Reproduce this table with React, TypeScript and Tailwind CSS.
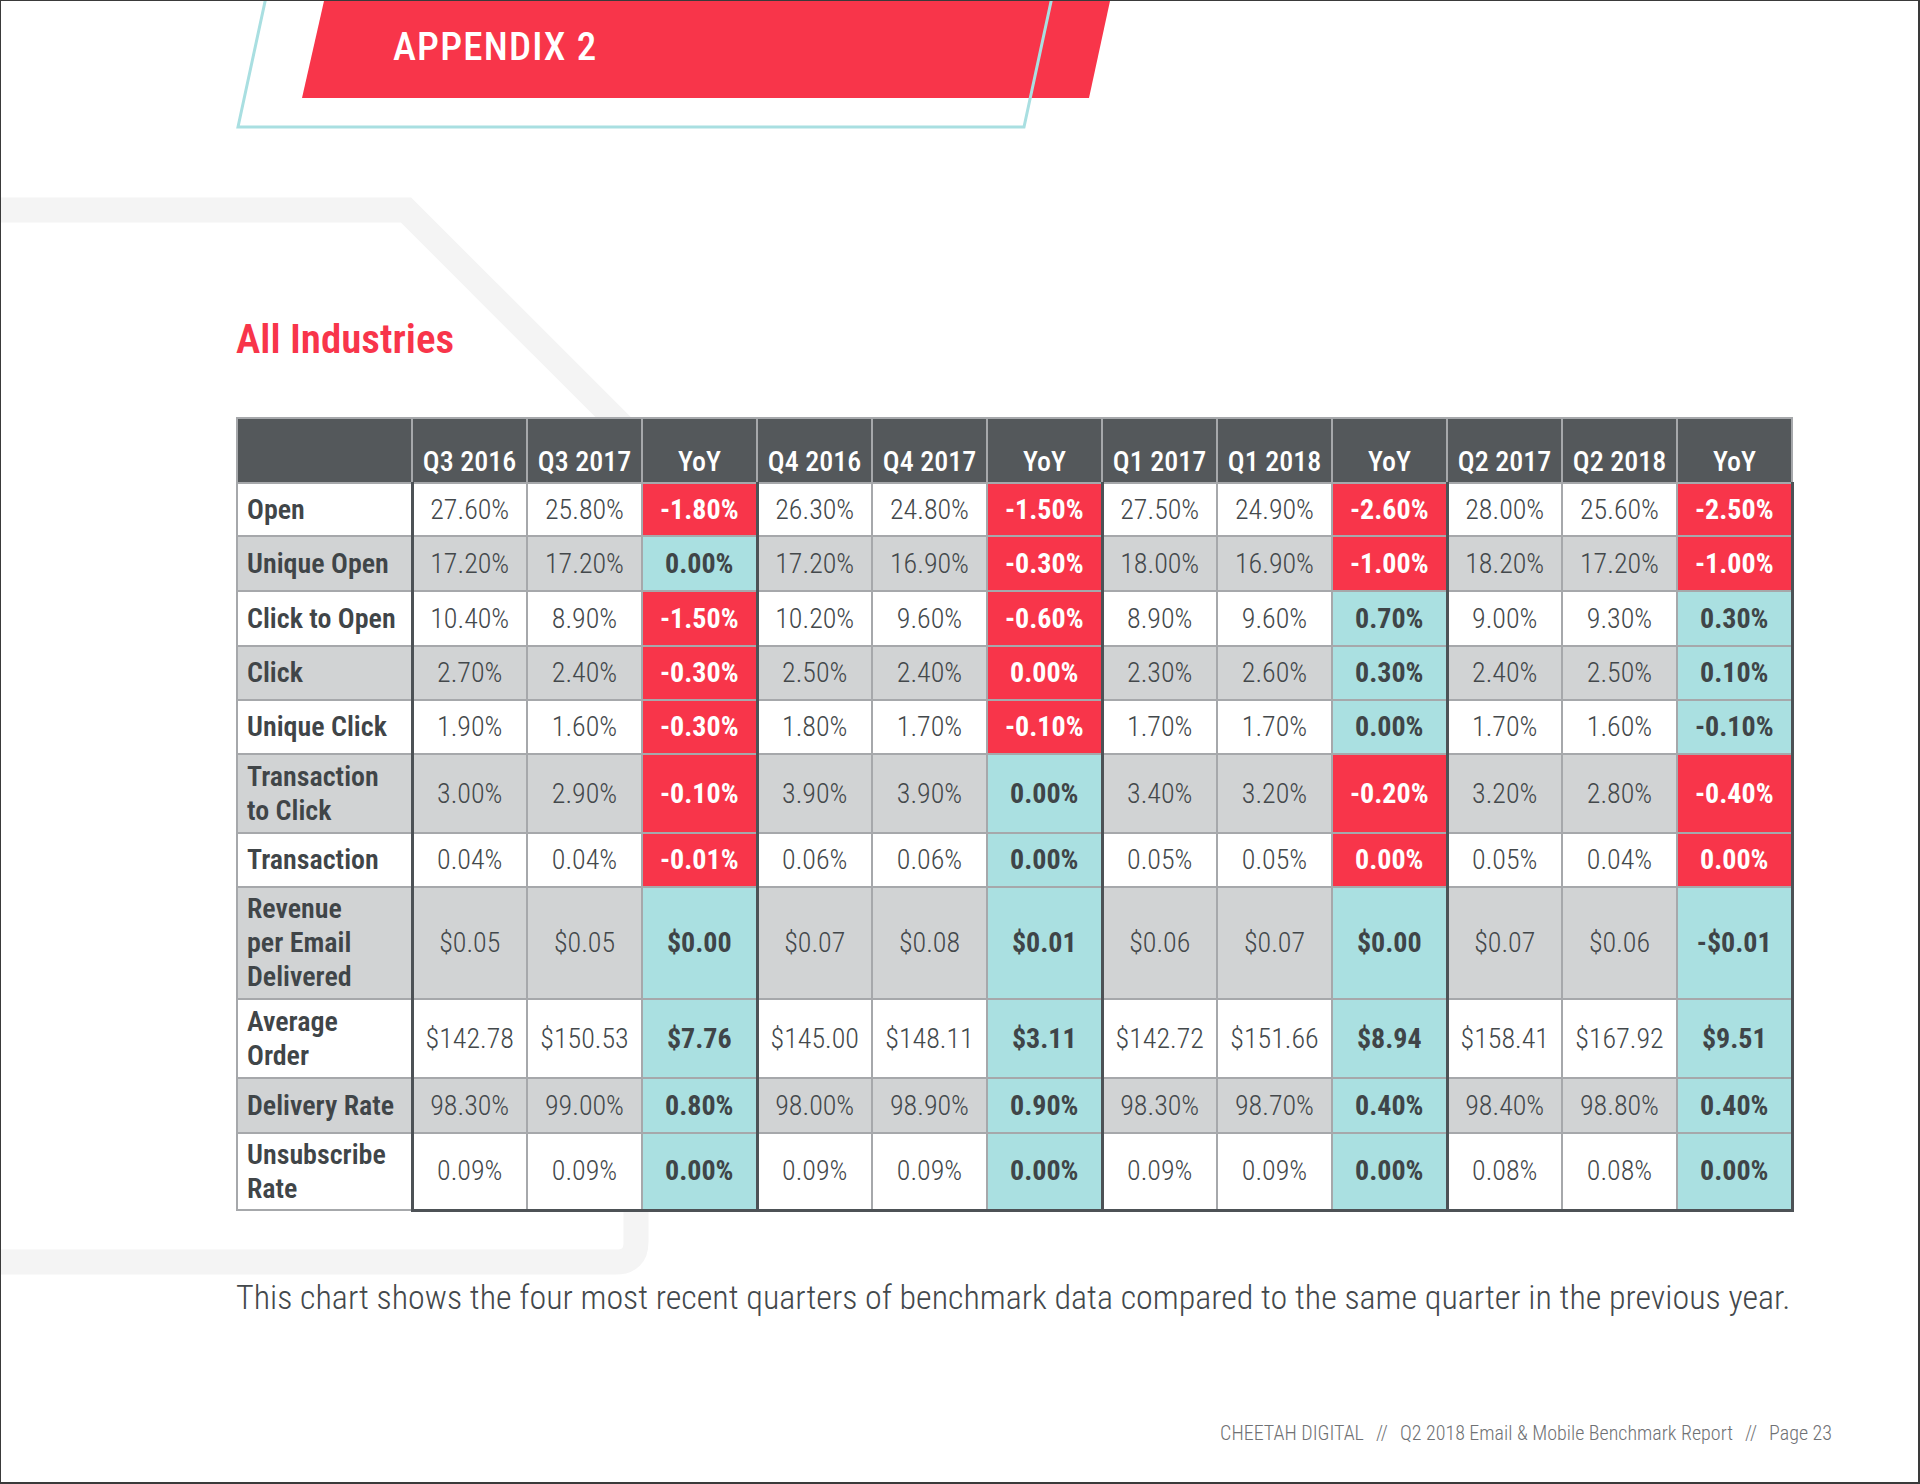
const COND = "font-['Roboto_Condensed',sans-serif]";

type Group = [string, string, string, boolean];
type Row = { label: string[]; h: string; grey: boolean; groups: Group[] };

const R = true;
const T = false;

const heads = ["Q3 2016", "Q3 2017", "YoY", "Q4 2016", "Q4 2017", "YoY", "Q1 2017", "Q1 2018", "YoY", "Q2 2017", "Q2 2018", "YoY"];

const rows: Row[] = [
  { label: ["Open"], h: "h-[53px]", grey: false, groups: [["27.60%", "25.80%", "-1.80%", R], ["26.30%", "24.80%", "-1.50%", R], ["27.50%", "24.90%", "-2.60%", R], ["28.00%", "25.60%", "-2.50%", R]] },
  { label: ["Unique Open"], h: "h-[55px]", grey: true, groups: [["17.20%", "17.20%", "0.00%", T], ["17.20%", "16.90%", "-0.30%", R], ["18.00%", "16.90%", "-1.00%", R], ["18.20%", "17.20%", "-1.00%", R]] },
  { label: ["Click to Open"], h: "h-[55px]", grey: false, groups: [["10.40%", "8.90%", "-1.50%", R], ["10.20%", "9.60%", "-0.60%", R], ["8.90%", "9.60%", "0.70%", T], ["9.00%", "9.30%", "0.30%", T]] },
  { label: ["Click"], h: "h-[54px]", grey: true, groups: [["2.70%", "2.40%", "-0.30%", R], ["2.50%", "2.40%", "0.00%", R], ["2.30%", "2.60%", "0.30%", T], ["2.40%", "2.50%", "0.10%", T]] },
  { label: ["Unique Click"], h: "h-[54px]", grey: false, groups: [["1.90%", "1.60%", "-0.30%", R], ["1.80%", "1.70%", "-0.10%", R], ["1.70%", "1.70%", "0.00%", T], ["1.70%", "1.60%", "-0.10%", T]] },
  { label: ["Transaction", "to Click"], h: "h-[79px]", grey: true, groups: [["3.00%", "2.90%", "-0.10%", R], ["3.90%", "3.90%", "0.00%", T], ["3.40%", "3.20%", "-0.20%", R], ["3.20%", "2.80%", "-0.40%", R]] },
  { label: ["Transaction"], h: "h-[54px]", grey: false, groups: [["0.04%", "0.04%", "-0.01%", R], ["0.06%", "0.06%", "0.00%", T], ["0.05%", "0.05%", "0.00%", R], ["0.05%", "0.04%", "0.00%", R]] },
  { label: ["Revenue", "per Email", "Delivered"], h: "h-[112px]", grey: true, groups: [["$0.05", "$0.05", "$0.00", T], ["$0.07", "$0.08", "$0.01", T], ["$0.06", "$0.07", "$0.00", T], ["$0.07", "$0.06", "-$0.01", T]] },
  { label: ["Average", "Order"], h: "h-[79px]", grey: false, groups: [["$142.78", "$150.53", "$7.76", T], ["$145.00", "$148.11", "$3.11", T], ["$142.72", "$151.66", "$8.94", T], ["$158.41", "$167.92", "$9.51", T]] },
  { label: ["Delivery Rate"], h: "h-[55px]", grey: true, groups: [["98.30%", "99.00%", "0.80%", T], ["98.00%", "98.90%", "0.90%", T], ["98.30%", "98.70%", "0.40%", T], ["98.40%", "98.80%", "0.40%", T]] },
  { label: ["Unsubscribe", "Rate"], h: "h-[77px]", grey: false, groups: [["0.09%", "0.09%", "0.00%", T], ["0.09%", "0.09%", "0.00%", T], ["0.09%", "0.09%", "0.00%", T], ["0.08%", "0.08%", "0.00%", T]] },
];

function Banner() {
  return (
    <div className="relative h-[126px]">
      <svg className="absolute left-0 top-0" width="1130" height="130" viewBox="0 0 1130 130">
        <polygon points="323,0 1109,0 1088,97 301,97" fill="#f8354a" />
        <polyline points="265,-4 237,126 1023,126 1051,-4" fill="none" stroke="#a9dfe1" strokeWidth="3" />
      </svg>
      <div className={`relative pl-[392px] pt-[27px] text-[39px] font-medium leading-none tracking-[0.03em] text-white ${COND}`}>
        APPENDIX 2
      </div>
    </div>
  );
}

function DataTable() {
  const last = rows.length - 1;
  return (
    <table className={`w-[1555px] table-fixed border-collapse ${COND}`}>
      <colgroup>
        <col className="w-[175px]" />
        {heads.map((_, i) => (
          <col key={i} className="w-[115px]" />
        ))}
      </colgroup>
      <thead>
        <tr className="h-[65px] bg-[#54585b]">
          <th className="border-2 border-[#a6a8ab]" />
          {heads.map((h, i) => (
            <th
              key={i}
              className="border-2 border-[#a6a8ab] pb-[6px] align-bottom text-[28px] font-medium leading-none text-white"
            >
              {h}
            </th>
          ))}
        </tr>
      </thead>
      <tbody>
        {rows.map((r, ri) => (
          <tr key={ri} className={`${r.h} ${r.grey ? "bg-[#d1d3d4]" : "bg-white"}`}>
            <td className="border-2 border-r-[3px] border-[#a6a8ab] border-r-[#4d5256] pl-[9px] text-left text-[28px] font-semibold leading-[34px] text-[#404548]">
              {r.label.map((l, li) => (
                <div key={li}>{l}</div>
              ))}
            </td>
            {r.groups.map((g, gi) => {
              const bottom = ri === last ? "border-b-[3px] border-b-[#4d5256]" : "";
              return [0, 1, 2].map((k) => {
                if (k < 2) {
                  return (
                    <td
                      key={`${gi}-${k}`}
                      className={`border-2 border-[#a6a8ab] text-center text-[28px] font-light leading-none text-[#43484b] ${bottom}`}
                    >
                      {g[k]}
                    </td>
                  );
                }
                return (
                  <td
                    key={`${gi}-${k}`}
                    className={`border-2 border-r-[3px] border-[#a6a8ab] border-r-[#4d5256] text-center text-[28px] font-bold leading-none ${
                      g[3] ? "bg-[#f8354a] text-white" : "bg-[#aae0e1] text-[#3f4548]"
                    } ${bottom}`}
                  >
                    {g[2]}
                  </td>
                );
              });
            })}
          </tr>
        ))}
      </tbody>
    </table>
  );
}

export default function App() {
  return (
    <div className="relative h-[1484px] w-[1920px] overflow-hidden border-l border-t border-b-2 border-r-2 border-[#3a3a3a] bg-white">
      {/* faint background outline */}
      <svg className="pointer-events-none absolute left-0 top-0" width="1920" height="1484" viewBox="0 0 1920 1484">
        <path
          d="M -20 209 L 405 209 L 635 439 L 635 1241 Q 635 1261 615 1261 L -20 1261"
          fill="none"
          stroke="#f4f4f4"
          strokeWidth="25"
        />
      </svg>

      <div className="relative">
        <Banner />
        <div className="ml-[235px]">
          <h1 className={`mt-[192px] text-[41px] font-semibold leading-none text-[#f8354a] ${COND}`}>All Industries</h1>
          <div className="mt-[57px]">
            <DataTable />
          </div>
          <p className={`mt-[68px] text-[34px] font-light leading-none text-[#43484b] ${COND}`}>
            This chart shows the four most recent quarters of benchmark data compared to the same quarter in the previous year.
          </p>
        </div>
        <div className={`mt-[109px] flex justify-end pr-[86px] text-[20px] font-light leading-none text-[#6f7174] ${COND}`}>
          <span>CHEETAH DIGITAL</span>
          <span className="mx-[12px]">//</span>
          <span>Q2 2018 Email &amp; Mobile Benchmark Report</span>
          <span className="mx-[12px]">//</span>
          <span>Page 23</span>
        </div>
      </div>
    </div>
  );
}
